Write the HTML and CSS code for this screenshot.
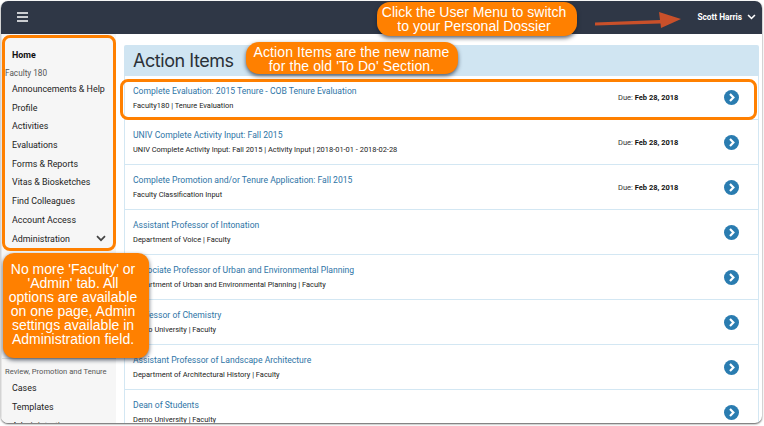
FILE: index.html
```html
<!DOCTYPE html>
<html lang="en">
<head>
<meta charset="utf-8">
<title>Action Items</title>
<link rel="stylesheet" href="styles.css">
</head>
<body>
<div class="window">
  <header class="topbar">
    <svg class="burger" width="11" height="10" viewBox="0 0 11 10"><path d="M0 1h11M0 5h11M0 9h11" stroke="#fff" stroke-width="1.7"/></svg>
    <div class="user">Scott Harris
      <svg width="9" height="6" viewBox="0 0 10 7"><path d="M1 1.200l4 4 4-4" fill="none" stroke="#fff" stroke-width="1.900"/></svg>
    </div>
  </header>
  <div class="body">
    <nav class="side">
      <a class="nav home">Home</a>
      <div class="group">Faculty 180</div>
      <a class="nav">Announcements &amp; Help</a>
      <a class="nav">Profile</a>
      <a class="nav">Activities</a>
      <a class="nav">Evaluations</a>
      <a class="nav">Forms &amp; Reports</a>
      <a class="nav">Vitas &amp; Biosketches</a>
      <a class="nav">Find Colleagues</a>
      <a class="nav">Account Access</a>
      <a class="nav admin">Administration
        <svg width="10" height="7" viewBox="0 0 10 7"><path d="M1 1.200l4 4 4-4" fill="none" stroke="#444" stroke-width="1.700"/></svg>
      </a>
      <div class="spacer"></div>
      <div class="group review">Review, Promotion and Tenure</div>
      <a class="nav">Cases</a>
      <a class="nav">Templates</a>
      <a class="nav">Administration</a>
    </nav>
    <main class="main">
      <h1 class="title">Action Items</h1>
      <section class="list">
        <article class="row"><div class="info"><a class="link">Complete Evaluation: 2015 Tenure - COB Tenure Evaluation</a><p class="sub">Faculty180 | Tenure Evaluation</p></div><div class="due">Due: <b>Feb 28, 2018</b></div><span class="go"><svg width="15" height="15" viewBox="0 0 15 15"><circle cx="7.5" cy="7.5" r="7.5" fill="#2a7cb0"/><path d="M6 4l3.400 3.500L6 11" fill="none" stroke="#fff" stroke-width="2.200"/></svg></span></article>
        <article class="row"><div class="info"><a class="link">UNIV Complete Activity Input: Fall 2015</a><p class="sub">UNIV Complete Activity Input: Fall 2015 | Activity Input | 2018-01-01 - 2018-02-28</p></div><div class="due">Due: <b>Feb 28, 2018</b></div><span class="go"><svg width="15" height="15" viewBox="0 0 15 15"><circle cx="7.5" cy="7.5" r="7.5" fill="#2a7cb0"/><path d="M6 4l3.400 3.500L6 11" fill="none" stroke="#fff" stroke-width="2.200"/></svg></span></article>
        <article class="row"><div class="info"><a class="link">Complete Promotion and/or Tenure Application: Fall 2015</a><p class="sub">Faculty Classification Input</p></div><div class="due">Due: <b>Feb 28, 2018</b></div><span class="go"><svg width="15" height="15" viewBox="0 0 15 15"><circle cx="7.5" cy="7.5" r="7.5" fill="#2a7cb0"/><path d="M6 4l3.400 3.500L6 11" fill="none" stroke="#fff" stroke-width="2.200"/></svg></span></article>
        <article class="row"><div class="info"><a class="link">Assistant Professor of Intonation</a><p class="sub">Department of Voice | Faculty</p></div><span class="go"><svg width="15" height="15" viewBox="0 0 15 15"><circle cx="7.5" cy="7.5" r="7.5" fill="#2a7cb0"/><path d="M6 4l3.400 3.500L6 11" fill="none" stroke="#fff" stroke-width="2.200"/></svg></span></article>
        <article class="row"><div class="info"><a class="link">Associate Professor of Urban and Environmental Planning</a><p class="sub">Department of Urban and Environmental Planning | Faculty</p></div><span class="go"><svg width="15" height="15" viewBox="0 0 15 15"><circle cx="7.5" cy="7.5" r="7.5" fill="#2a7cb0"/><path d="M6 4l3.400 3.500L6 11" fill="none" stroke="#fff" stroke-width="2.200"/></svg></span></article>
        <article class="row"><div class="info"><a class="link">Professor of Chemistry</a><p class="sub">Demo University | Faculty</p></div><span class="go"><svg width="15" height="15" viewBox="0 0 15 15"><circle cx="7.5" cy="7.5" r="7.5" fill="#2a7cb0"/><path d="M6 4l3.400 3.500L6 11" fill="none" stroke="#fff" stroke-width="2.200"/></svg></span></article>
        <article class="row"><div class="info"><a class="link">Assistant Professor of Landscape Architecture</a><p class="sub">Department of Architectural History | Faculty</p></div><span class="go"><svg width="15" height="15" viewBox="0 0 15 15"><circle cx="7.5" cy="7.5" r="7.5" fill="#2a7cb0"/><path d="M6 4l3.400 3.500L6 11" fill="none" stroke="#fff" stroke-width="2.200"/></svg></span></article>
        <article class="row"><div class="info"><a class="link">Dean of Students</a><p class="sub">Demo University | Faculty</p></div><span class="go"><svg width="15" height="15" viewBox="0 0 15 15"><circle cx="7.5" cy="7.5" r="7.5" fill="#2a7cb0"/><path d="M6 4l3.400 3.500L6 11" fill="none" stroke="#fff" stroke-width="2.200"/></svg></span></article>
      </section>
    </main>
  </div>
  <div class="ring ring-side"></div>
  <div class="ring ring-row"></div>
  <div class="callout c-user">Click the User Menu to switch<br>to your Personal Dossier</div>
  <div class="callout c-items">Action Items are the new name<br>for the old 'To Do' Section.</div>
  <div class="callout c-side">No more 'Faculty' or<br>'Admin' tab. All<br>options are available<br>on one page, Admin<br>settings available in<br>Administration field.</div>
  <svg class="arrow" width="90" height="20" viewBox="0 0 90 20"><path d="M0 11.500L65 9 64 1 86 8 66 17 65.500 12.500 0 14.500Z" fill="#c9502a"/></svg>
</div>
</body>
</html>
```
FILE: styles.css
```css
* { box-sizing: border-box; }
html, body { margin: 0; height: 100%; background: #fff; overflow: hidden; }
body { padding: 1px 2px 3px 1px; font-family: Roboto, "Liberation Sans", sans-serif; }
.window {
  position: relative; height: 422px; border-radius: 7px; overflow: hidden;
  background: #fff; box-shadow: 0 1px 2px rgba(0,0,0,.65);
  display: flex; flex-direction: column;
}
.topbar {
  height: 33px; flex: none; background: #2f3746; color: #fff;
  display: flex; align-items: center; justify-content: space-between;
  padding: 0 5px 2px 16px;
}
.burger { display: block; }
.user { display: flex; align-items: center; gap: 5px; font-size: 8.3px; font-weight: 700; margin-right: 1px; white-space: nowrap; }
.body { flex: 1; display: flex; min-height: 0; }
.side {
  width: 115px; flex: none; background: #f6f6f6; padding-top: 12px;
  border-left: 1px solid #e5e5e5; overflow: hidden;
}
.nav {
  display: flex; justify-content: space-between; align-items: center; white-space: nowrap;
  height: 18.7px; padding: 0 10px 0 10px; font-size: 8.9px; color: #222;
}
.home { font-weight: 700; color: #111; }
.group { height: 15px; padding: 3px 0 0 3px; font-size: 8.2px; color: #555; line-height: 11px; white-space: nowrap; }
.spacer { height: 111px; border-bottom: 1px solid #ddd; margin-bottom: 7px; }
.review { height: 13px; padding: 0 0 0 3px; font-size: 7.6px; }
.main { flex: 1; padding: 11px 3px 0 8px; min-width: 0; }
.title {
  margin: 0; height: 31px; padding-left: 9px; background: #d0e5f2;
  font: 400 18px/31px Inter, Lato, sans-serif; color: #2b3138; letter-spacing: -.45px;
  border-radius: 2px 2px 0 0;
}
.list { border: 1px solid #d3e7f3; border-top: 0; }
.row { height: 45px; display: flex; align-items: center; padding: 0 19px 0 8px; border-bottom: 1px solid #d3e7f3; }
.row:first-child { height: 44px; }
.info { flex: 1; min-width: 0; }
.link { display: block; font-size: 8.6px; line-height: 13px; color: #2e74a6; }
.sub { margin: 2px 0 0; font-size: 7.45px; line-height: 11px; color: #222; }
.due { width: 106px; flex: none; font-size: 7.5px; color: #333; }
.due b { color: #111; }
.go { width: 15px; height: 15px; flex: none; }
.go svg { display: block; }
.ring { position: absolute; border: 3.5px solid #ff8000; border-radius: 8px; pointer-events: none; }
.ring-side { left: 1px; top: 34px; width: 114px; height: 216px; }
.ring-row { left: 119px; top: 78px; width: 637px; height: 41px; }
.callout {
  position: absolute; background: #ff8000; color: #fff; text-align: center;
  font-family: "Liberation Sans", sans-serif; font-size: 14px; line-height: 14px;
  box-shadow: 0 2px 4px rgba(20,30,50,.7);
}
.c-user { left: 376px; top: 1px; width: 200px; height: 34px; padding: 3px 6px 0 0; border-radius: 13px; }
.c-items { left: 245px; top: 41px; width: 212px; height: 32px; padding: 3px 1px 0 0; border-radius: 13px; letter-spacing: .1px; }
.c-side { left: 2px; top: 252px; width: 146px; height: 105px; padding: 9px 6px 0 0; border-radius: 11px; }
.arrow { position: absolute; left: 594px; top: 10px; }
```
